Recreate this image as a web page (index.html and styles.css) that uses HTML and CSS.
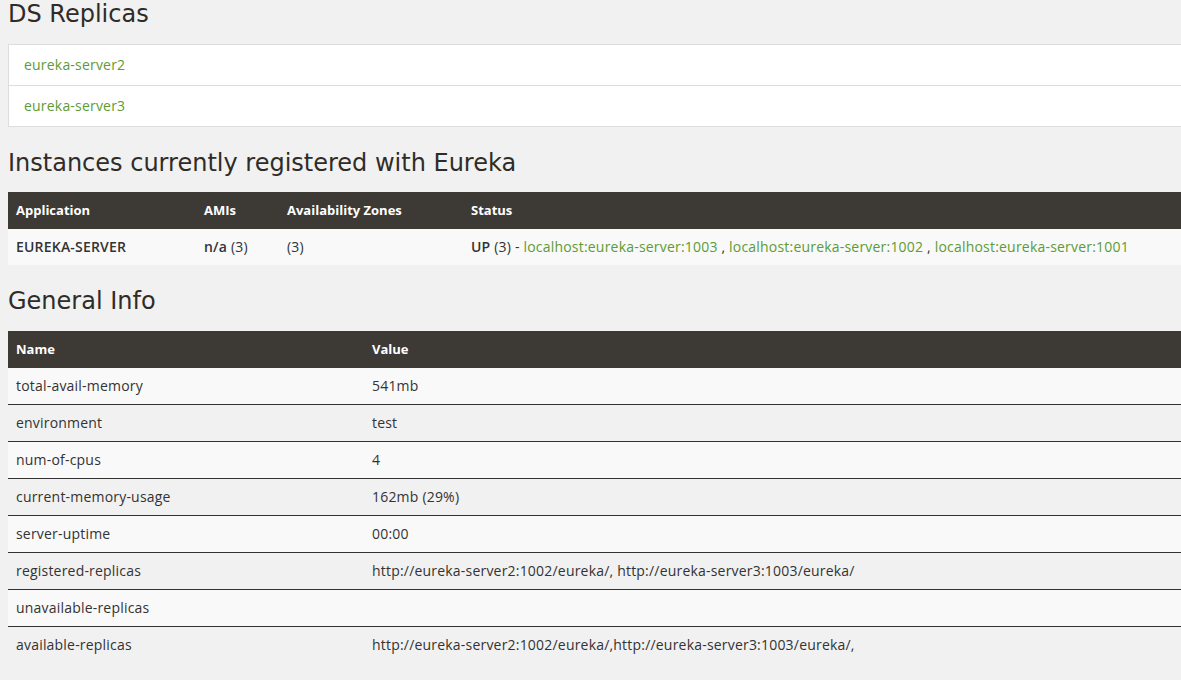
FILE: index.html
```html
<!DOCTYPE html>
<html lang="en">
<head>
<meta charset="utf-8">
<title>Eureka</title>
<link rel="stylesheet" href="styles.css">
</head>
<body>
<main class="page">
  <h1 class="title first">DS Replicas</h1>
  <ul class="replicas">
    <li><a href="#">eureka-server2</a></li>
    <li><a href="#">eureka-server3</a></li>
  </ul>

  <h1 class="title">Instances currently registered with Eureka</h1>
  <table class="grid instances">
    <thead>
      <tr>
        <th class="c-app">Application</th>
        <th class="c-ami">AMIs</th>
        <th class="c-az">Availability Zones</th>
        <th>Status</th>
      </tr>
    </thead>
    <tbody>
      <tr>
        <td class="strong">EUREKA-SERVER</td>
        <td><b>n/a</b> (3)</td>
        <td>(3)</td>
        <td><b>UP</b> (3) - <a href="#">localhost:eureka-server:1003</a> , <a href="#">localhost:eureka-server:1002</a> , <a href="#">localhost:eureka-server:1001</a></td>
      </tr>
    </tbody>
  </table>

  <h1 class="title">General Info</h1>
  <table class="grid info">
    <thead>
      <tr><th class="c-name">Name</th><th>Value</th></tr>
    </thead>
    <tbody>
      <tr><td>total-avail-memory</td><td>541mb</td></tr>
      <tr><td>environment</td><td>test</td></tr>
      <tr><td>num-of-cpus</td><td>4</td></tr>
      <tr><td>current-memory-usage</td><td>162mb (29%)</td></tr>
      <tr><td>server-uptime</td><td>00:00</td></tr>
      <tr><td>registered-replicas</td><td>http://eureka-server2:1002/eureka/, http://eureka-server3:1003/eureka/</td></tr>
      <tr><td>unavailable-replicas</td><td></td></tr>
      <tr><td>available-replicas</td><td>http://eureka-server2:1002/eureka/,http://eureka-server3:1003/eureka/,</td></tr>
    </tbody>
  </table>
</main>
</body>
</html>
```

FILE: styles.css
```css
html, body {
  margin: 0;
  padding: 0;
  background: #f1f1f1;
  overflow: hidden;
}

body {
  font-family: "Open Sans", "Liberation Sans", sans-serif;
  font-size: 14px;
  letter-spacing: 0.2px;
  color: #333;
}

.page {
  margin-left: 8px;
  width: 1200px;
}

.title {
  font-family: "DejaVu Sans", sans-serif;
  font-weight: normal;
  font-size: 24px;
  line-height: 26px;
  letter-spacing: 0;
  color: #2f2c28;
  margin: 23px 0 16px 0;
}

.title.first {
  margin-top: 0;
  padding-top: 1px;
  margin-bottom: 17px;
}

a {
  color: #5d9b35;
  text-decoration: none;
}

.replicas {
  list-style: none;
  margin: 0;
  padding: 0;
  background: #fff;
  border: 1px solid #ddd;
}

.replicas li {
  padding: 10px 15px;
  line-height: 20px;
}

.replicas li + li {
  border-top: 1px solid #ddd;
}

.grid {
  width: 100%;
  border-collapse: collapse;
  border-spacing: 0;
}

.info {
  margin-top: 17px;
}

.grid th {
  background: #3d3934;
  color: #fff;
  font-size: 13px;
  letter-spacing: 0;
  font-weight: bold;
  text-align: left;
  padding: 8px;
  line-height: 21px;
}

.grid td {
  padding: 8px;
  line-height: 20px;
  text-align: left;
}

.grid tbody tr:nth-child(odd) {
  background: #f9f9f9;
}

.info tbody tr + tr td {
  border-top: 1px solid #333;
}

.strong, .grid td b {
  font-weight: 600;
}

.c-app { width: 172px; }
.c-ami { width: 67px; }
.c-az { width: 168px; }
.c-name { width: 340px; }
```
